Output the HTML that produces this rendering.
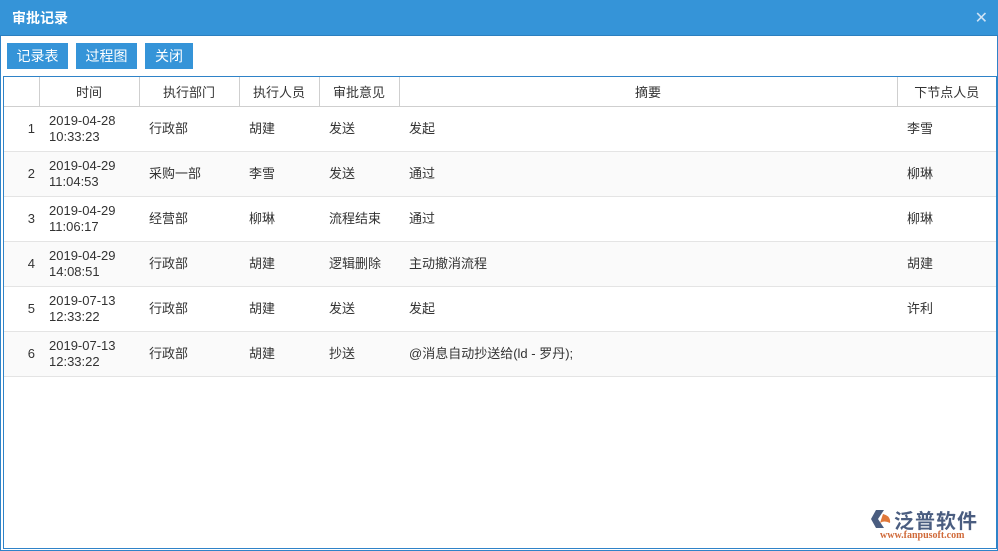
<!DOCTYPE html>
<html><head><meta charset="utf-8"><style>
*{margin:0;padding:0;box-sizing:border-box}
body{width:998px;height:551px;overflow:hidden;background:#fff;font-family:"Liberation Sans","Noto Sans CJK SC",sans-serif;font-size:13px;color:#333;position:relative}
.win{position:absolute;left:0;top:0;width:998px;height:551px;border:1px solid #2f83c8;border-top:none}
.title{position:absolute;left:0;top:0;width:998px;height:36px;background:#3594d8;border-bottom:1px solid #2c7fbf;color:#fff;font-weight:bold;font-size:14px;line-height:36px;padding-left:12px}
.x{position:absolute;right:10px;top:0;color:#cfe3f5;font-size:16px;font-weight:normal;line-height:36px;font-family:"DejaVu Sans",sans-serif}
.btn{position:absolute;top:43px;height:26px;background:#3594d8;color:#fff;font-size:14px;line-height:26px;text-align:center}
.tbl{position:absolute;left:3px;top:76px;width:994px;height:473px;border:1px solid #2f83c8}
table{border-collapse:collapse;table-layout:fixed;width:992px}
th{height:29px;font-weight:normal;font-size:13px;border-right:1px solid #cfcfcf;border-bottom:1px solid #cfcfcf;color:#333}
td{height:45px;border-bottom:1px solid #e4e4e4;padding-left:10px;line-height:16px;vertical-align:middle}
td.n{text-align:right;padding-right:4px;padding-left:0}
tr.g td{background:#fafafa}
.logo{position:absolute;left:868px;top:506px}
</style></head><body>
<div class="win"></div>
<div class="title">审批记录<span class="x">✕</span></div>
<div class="btn" style="left:7px;width:61px">记录表</div>
<div class="btn" style="left:76px;width:61px">过程图</div>
<div class="btn" style="left:145px;width:48px">关闭</div>
<div class="tbl">
<table>
<colgroup><col style="width:35px"><col style="width:100px"><col style="width:100px"><col style="width:80px"><col style="width:80px"><col style="width:498px"><col style="width:99px"></colgroup>
<tr><th></th><th>时间</th><th>执行部门</th><th>执行人员</th><th>审批意见</th><th>摘要</th><th style="border-right:none">下节点人员</th></tr>
<tr><td class="n">1</td><td>2019-04-28<br>10:33:23</td><td>行政部</td><td>胡建</td><td>发送</td><td>发起</td><td>李雪</td></tr>
<tr class="g"><td class="n">2</td><td>2019-04-29<br>11:04:53</td><td>采购一部</td><td>李雪</td><td>发送</td><td>通过</td><td>柳琳</td></tr>
<tr><td class="n">3</td><td>2019-04-29<br>11:06:17</td><td>经营部</td><td>柳琳</td><td>流程结束</td><td>通过</td><td>柳琳</td></tr>
<tr class="g"><td class="n">4</td><td>2019-04-29<br>14:08:51</td><td>行政部</td><td>胡建</td><td>逻辑删除</td><td>主动撤消流程</td><td>胡建</td></tr>
<tr><td class="n">5</td><td>2019-07-13<br>12:33:22</td><td>行政部</td><td>胡建</td><td>发送</td><td>发起</td><td>许利</td></tr>
<tr class="g"><td class="n">6</td><td>2019-07-13<br>12:33:22</td><td>行政部</td><td>胡建</td><td>抄送</td><td>@消息自动抄送给(ld - 罗丹);</td><td></td></tr>
</table>
</div>
<div class="logo">
<svg width="22" height="22" style="position:absolute;left:2px;top:2px"><path d="M6 2 L14 2 L8 11 L14 20 L6 20 L1 11Z" fill="#4a5d80"/><path d="M13 6 Q21 8 20 15 Q14 12 10 15Z" fill="#e0783a"/></svg>
<div style="position:absolute;left:26px;top:-1px;font-size:20px;font-weight:bold;color:#4a5d80;white-space:nowrap;letter-spacing:1px">泛普软件</div>
<div style="position:absolute;left:12px;top:24px;font-size:10px;font-weight:bold;color:#d06a3a;font-family:'Liberation Serif',serif;white-space:nowrap">www.fanpusoft.com</div>
</div>
</body></html>
